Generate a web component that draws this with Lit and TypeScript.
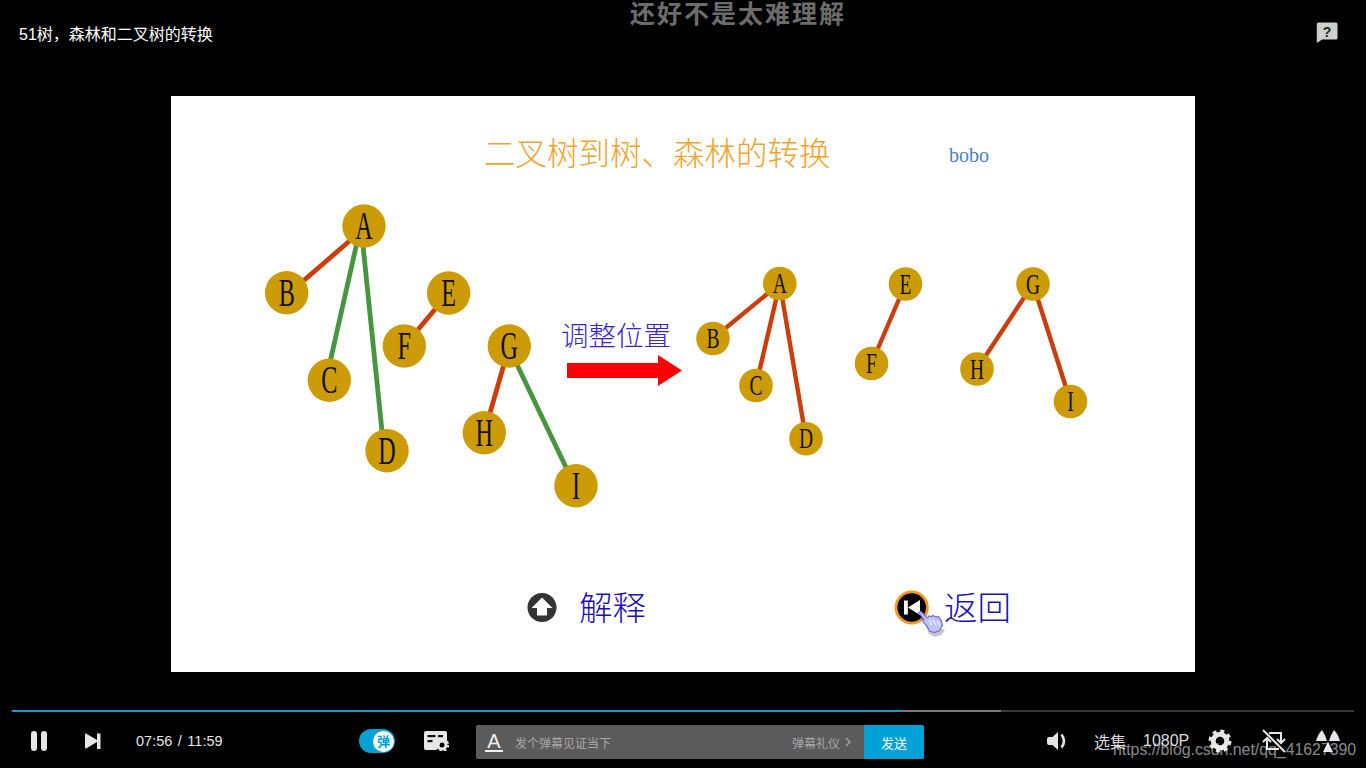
import { LitElement, html, css, svg } from "lit";
import { customElement } from "lit/decorators.js";

type Node = { id: string; x: number; y: number };
type Edge = [string, string, string, number, number];

const leftNodes: Node[] = [
  { id: "A", x: 364, y: 226 },
  { id: "B", x: 286.7, y: 292.7 },
  { id: "C", x: 329.3, y: 380.3 },
  { id: "D", x: 387, y: 450.7 },
  { id: "E", x: 448.7, y: 293 },
  { id: "F", x: 404.3, y: 346 },
  { id: "G", x: 509.3, y: 346 },
  { id: "H", x: 484.3, y: 432.7 },
  { id: "I", x: 576, y: 485.7 },
];
const rightNodes: Node[] = [
  { id: "A", x: 779.8, y: 283.5 },
  { id: "B", x: 713, y: 338.5 },
  { id: "C", x: 756, y: 385.5 },
  { id: "D", x: 806, y: 438.7 },
  { id: "E", x: 905.5, y: 284 },
  { id: "F", x: 871.5, y: 363.5 },
  { id: "G", x: 1033, y: 284 },
  { id: "H", x: 977, y: 369 },
  { id: "I", x: 1070.5, y: 401.5 },
];
const leftEdges: Edge[] = [
  ["A", "B", "red", 0, 2.5],
  ["A", "C", "green", -3.3, 0],
  ["A", "D", "green", -3, 0],
  ["E", "F", "red", 0, 0],
  ["G", "H", "red", 0, 0],
  ["G", "I", "green", -1.2, 0],
];
const rightEdges: Edge[] = [
  ["A", "B", "red", 0, 0],
  ["A", "C", "red", 0, 0],
  ["A", "D", "red", 0, 0],
  ["E", "F", "red", 0, 0],
  ["G", "H", "red", 0, 0],
  ["G", "I", "red", 0, 0],
];

function tree(nodes: Node[], edges: Edge[], r: number, fs: number, sx: number, w: number) {
  const at = (id: string) => nodes.find((n) => n.id === id)!;
  return svg`
    ${edges.map(([a, b, c, dx, dy]) => svg`<line class="edge ${c}" stroke-width=${w}
      x1=${at(a).x + dx} y1=${at(a).y + dy} x2=${at(b).x + dx} y2=${at(b).y + dy}></line>`)}
    ${nodes.map((n) => svg`
      <circle class="node" cx=${n.x} cy=${n.y} r=${r}></circle>
      <text class="letter" font-size=${fs} text-anchor="middle"
        transform="translate(${n.x} ${n.y + fs * 0.33}) scale(${sx} 1)">${n.id}</text>`)}
  `;
}

@customElement("app-root")
export class AppRoot extends LitElement {
  static styles = css`
    :host { display: block; }
    .page {
      position: relative; width: 100%; height: 768px; overflow: hidden;
      background: #000; display: flex; flex-direction: column;
      font-family: "Liberation Sans", "Noto Sans CJK SC", sans-serif;
    }
    .top {
      height: 96px; flex: none; display: flex; justify-content: space-between;
      align-items: flex-start; padding: 22px 28px 0 19px; box-sizing: border-box;
    }
    .title { color: #fff; font-size: 16px; line-height: 24px; margin-top: 1px; }
    .help { display: block; }
    .help text { font: bold 14px "Liberation Sans", sans-serif; fill: #222; }
    .danmaku {
      position: absolute; left: 630px; top: -1px; color: #6c6c6c;
      font-size: 25px; line-height: 30px; font-weight: bold; letter-spacing: 2px; white-space: nowrap;
    }
    .stage { flex: none; display: flex; justify-content: center; height: 576px; }
    .slide { display: block; width: 1024px; height: 576px; background: #fff; }
    .edge { stroke-linecap: butt; }
    .edge.red { stroke: #cc3d0b; }
    .edge.green { stroke: #46963f; }
    .node { fill: #cc9b06; }
    .letter { font-family: "Liberation Serif", serif; fill: #111; }
    .cjk { font-family: "Noto Sans CJK SC", sans-serif; font-weight: 300; }
    .s-title { font-size: 31.5px; fill: #f4a32a; }
    .bobo { font: 20px "Liberation Serif", serif; fill: #4a82c4; }
    .adjust { font-size: 27.5px; fill: #3b1fd0; }
    .link { font-size: 33.5px; fill: #1c10b4; }
    .controls-wrap { flex: 1; padding-top: 38px; }
    .progress { display: flex; height: 2px; margin: 0 12px; background: #3a3a3a; }
    .played { width: 889px; background: #00a1d6; }
    .buffered { width: 100px; background: #7a7a7a; }
    .controls { display: flex; align-items: center; height: 58px; padding-left: 31px; color: #e6e6e6; }
    .controls svg { display: block; flex: none; }
    .next { margin-left: 38px; }
    .time { margin-left: 35px; width: 87px; font-size: 14.5px; white-space: nowrap; word-spacing: 1.5px; }
    .toggle {
      margin-left: 136px; width: 36px; height: 24px; border-radius: 12px; background: #00a1d6;
      display: flex; align-items: center; justify-content: flex-end; padding-right: 1px; box-sizing: border-box; flex: none;
    }
    .knob {
      width: 21px; height: 21px; border-radius: 50%; background: #fff; color: #00a1d6;
      font-size: 13px; font-weight: bold; line-height: 21px; text-align: center;
    }
    .dm-set { margin-left: 29px; }
    .input {
      margin: 2px 0 0 27px; width: 448px; height: 34px; display: flex; border-radius: 2px; overflow: hidden; flex: none;
      background: #5b5b5b; color: #a8a8a8; font-size: 12px; align-items: center;
    }
    .a-ico {
      margin-left: 9px; width: 18px; height: 17px; flex: none; color: #f0f0f0; text-align: center;
      font-size: 20px; line-height: 16px; border-bottom: 2px solid #f0f0f0;
    }
    .ph { margin-left: 12px; flex: 1; white-space: nowrap; }
    .rule { display: flex; align-items: center; gap: 5px; margin-right: 13px; white-space: nowrap; }
    .send {
      width: 60px; height: 100%; background: #00a1d6; color: #fff; font-size: 13px;
      display: flex; align-items: center; justify-content: center; flex: none;
    }
    .vol { margin-left: 123px; }
    .txt { font-size: 16px; white-space: nowrap; color: #dcdcdc; }
    .ep { margin-left: 25px; }
    .res { margin-left: 17px; }
    .gear { margin-left: 19px; }
    .loop { margin-left: 30px; }
    .rad { margin-left: 30px; }
    .watermark {
      position: absolute; left: 1113px; top: 739px; color: rgba(255,255,255,.55);
      font-size: 15.85px; line-height: 22px; white-space: nowrap;
    }
  `;

  render() {
    return html`
      <div class="page">
        <div class="top">
          <div class="title">51树，森林和二叉树的转换</div>
          <svg class="help" width="22" height="22" viewBox="0 0 22 22">
            <path fill="#cfcfcf" d="M3 0.5h17a1.5 1.5 0 0 1 1.5 1.5v14a1.5 1.5 0 0 1-1.5 1.5H6L0.8 21V2A1.8 1.8 0 0 1 3 0.5z"></path>
            <text x="11" y="14.5" text-anchor="middle">?</text>
          </svg>
        </div>
        <div class="danmaku">还好不是太难理解</div>

        <div class="stage">
          <svg class="slide" viewBox="171 96 1024 576">
            <text class="cjk s-title" x="484" y="165">二叉树到树、森林的转换</text>
            <text class="bobo" x="949" y="162">bobo</text>
            ${tree(leftNodes, leftEdges, 21.7, 39, 0.62, 4.8)}
            <text class="cjk adjust" x="561" y="346">调整位置</text>
            <polygon fill="#fb0007" points="567,363 658,363 658,355 682,370.500 658,386 658,378 567,378"></polygon>
            ${tree(rightNodes, rightEdges, 16.8, 29.5, 0.66, 4.4)}

            <circle cx="542" cy="607.5" r="14.5" fill="#333"></circle>
            <polygon fill="#fff" points="542,597.500 552.500,608 547,608 547,615.500 537,615.500 537,608 531.500,608"></polygon>
            <text class="cjk link" x="579" y="620">解释</text>

            <circle cx="911.7" cy="607.5" r="15.7" fill="#000" stroke="#f59a1a" stroke-width="2.8"></circle>
            <rect x="904" y="600.5" width="3.8" height="14" fill="#fff"></rect>
            <polygon fill="#fff" points="908,607.500 920,600 920,615"></polygon>
            <path fill="#9a9a9a" opacity="0.55" d="M925 624l4 10 6 3 6-2 4-5z"></path>
            <path fill="#c4c4f4" stroke="#6f6fe0" stroke-width="1.2" d="M918.500 612.500l2.500-1 6.500 6.500 1.500-2 2.500.5 1.500-1 2.500 1.500 2.500-.5 3 3.500 1.500 5-3 5.500-5 2-5-1.500-2.500-5-3.500-3.500-1.500-3.500 2 .5z"></path>
            <path d="M929 620l3 5M933 620l3 5M937 621l2.500 4.500" stroke="#fff" stroke-width="1" fill="none"></path>
            <text class="cjk link" x="944" y="620">返回</text>
          </svg>
        </div>

        <div class="controls-wrap">
          <div class="progress"><div class="played"></div><div class="buffered"></div></div>
          <div class="controls">
            <svg width="16" height="20" viewBox="0 0 16 20"><rect x="0" y="0" width="6" height="20" rx="3" fill="#e6e6e6"></rect><rect x="10" y="0" width="6" height="20" rx="3" fill="#e6e6e6"></rect></svg>
            <svg class="next" width="16" height="16" viewBox="0 0 16 16"><path d="M0 1.500q0-1.500 1.500-.8L12 7v-6.500h3.500v15.500H12V9L1.500 15.300q-1.500.7-1.500-.8z" fill="#e6e6e6"></path></svg>
            <div class="time">07:56 / 11:59</div>
            <div class="toggle"><div class="knob">弹</div></div>
            <svg class="dm-set" width="25" height="20" viewBox="0 0 25 20">
              <path fill="#e6e6e6" d="M2 0h19a2 2 0 0 1 2 2v9h-6l-5 8H2a2 2 0 0 1-2-2V2a2 2 0 0 1 2-2z"></path>
              <rect x="3.500" y="4" width="8" height="2.200" fill="#111"></rect>
              <rect x="14" y="4" width="5" height="2.200" fill="#111"></rect>
              <rect x="3.500" y="9" width="5" height="2.200" fill="#111"></rect>
              <circle cx="18" cy="14" r="4" fill="none" stroke="#e6e6e6" stroke-width="3"></circle>
              <circle cx="18" cy="14" r="6.200" fill="none" stroke="#e6e6e6" stroke-width="2" stroke-dasharray="2.500 2.370"></circle>
            </svg>
            <div class="input">
              <div class="a-ico">A</div>
              <div class="ph">发个弹幕见证当下</div>
              <div class="rule">弹幕礼仪
                <svg width="6" height="10" viewBox="0 0 6 10"><path d="M1 1l4 4-4 4" fill="none" stroke="#a8a8a8" stroke-width="1.300"></path></svg>
              </div>
              <div class="send">发送</div>
            </div>
            <svg class="vol" width="22" height="20" viewBox="0 0 22 20">
              <path fill="#e6e6e6" d="M11 1v18L5.500 14H2q-2 0-2-2V8q0-2 2-2h3.500z"></path>
              <path d="M14.500 3.500q5 6.500 0 13" fill="none" stroke="#e6e6e6" stroke-width="2.600"></path>
            </svg>
            <div class="txt ep">选集</div>
            <div class="txt res">1080P</div>
            <svg class="gear" width="24" height="24" viewBox="0 0 24 24">
              <circle cx="12" cy="12" r="6.800" fill="none" stroke="#e6e6e6" stroke-width="5"></circle>
              <circle cx="12" cy="12" r="9.800" fill="none" stroke="#e6e6e6" stroke-width="3.400" stroke-dasharray="3.900 3.800"></circle>
            </svg>
            <svg class="loop" width="24" height="24" viewBox="0 0 24 24" fill="none" stroke="#e6e6e6" stroke-width="2">
              <path d="M1 1l22 22"></path>
              <path d="M7 4h12v9"></path>
              <path d="M15 10l4 4 4-4"></path>
              <path d="M5 10v10h12"></path>
              <path d="M1 13l4-4 4 4"></path>
            </svg>
            <svg class="rad" width="24" height="24" viewBox="0 0 24 24" fill="#e6e6e6">
              <path d="M0 12Q2 5 6 1Q9 5 11 12z"></path>
              <path d="M13 12Q15 5 18 1Q22 5 24 12z"></path>
              <path d="M7 23L12 13L17 23z"></path>
            </svg>
          </div>
        </div>
        <div class="watermark">https://blog.csdn.net/qq_41627390</div>
      </div>
    `;
  }
}
